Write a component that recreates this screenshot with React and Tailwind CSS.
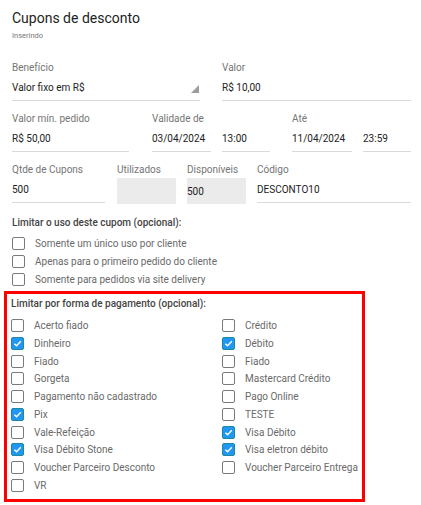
const Field = ({ label, value, className = '', gray = false }) => (
    <div className={`flex flex-col ${className}`}>
        <div className="h-[14px] leading-[14px] text-[10px] text-[#757575] whitespace-nowrap">{label}</div>
        {gray ? (
            <div className="mt-[1px] h-[26px] bg-[#ebebeb] flex items-center text-[10px] text-[#222]">
                {value}
            </div>
        ) : (
            <div className="mt-[5px] h-[16px] leading-[16px] pb-[4px] box-content border-b border-[#dadada] text-[10px] text-[#222] whitespace-nowrap relative">
                {value}
            </div>
        )}
    </div>
);

const Check = ({ checked, label }) => (
    <div className="h-[17.7px] flex items-center">
        {checked ? (
            <span className="w-[13px] h-[13px] rounded-[2px] bg-[#2196f3] border border-[#1d8a9c] flex items-center justify-center shrink-0">
                <svg width="9" height="9" viewBox="0 0 10 10">
                    <path d="M1.5 5.2 L4 7.4 L8.6 2.6" fill="none" stroke="#fff" strokeWidth="1.6" />
                </svg>
            </span>
        ) : (
            <span className="w-[13px] h-[13px] rounded-[2px] border border-[#7a7a7a] bg-white shrink-0" />
        )}
        <span className="ml-[10px] text-[10px] text-[#6a6a6a] whitespace-nowrap">{label}</span>
    </div>
);

const left = [
    ['Acerto fiado', false],
    ['Dinheiro', true],
    ['Fiado', false],
    ['Gorgeta', false],
    ['Pagamento não cadastrado', false],
    ['Pix', true],
    ['Vale-Refeição', false],
    ['Visa Débito Stone', true],
    ['Voucher Parceiro Desconto', false],
    ['VR', false],
];

const right = [
    ['Crédito', false],
    ['Débito', true],
    ['Fiado', false],
    ['Mastercard Crédito', false],
    ['Pago Online', false],
    ['TESTE', false],
    ['Visa Débito', true],
    ['Visa eletron débito', true],
    ['Voucher Parceiro Entrega', false],
];

export default function App() {
    return (
        <div className="w-[421px] h-[505px] bg-white overflow-hidden" style={{ fontFamily: 'Roboto, "Noto Sans", sans-serif' }}>
            <div className="pl-[12px] pr-[10px]">
                {/* Header */}
                <div className="pt-[9px] h-[18px] leading-[18px] text-[14px] text-[#222] box-content">Cupons de desconto</div>
                <div className="mt-[4px] text-[7.5px] leading-[10px] text-[#777]">Inserindo</div>

                {/* Row 1 */}
                <div className="mt-[20px] flex">
                    <div className="w-[188px] relative">
                        <Field label="Benefício" value="Valor fixo em R$" />
                        <svg className="absolute right-[1px] top-[24px]" width="8" height="8" viewBox="0 0 8 8">
                            <path d="M8 0 L8 8 L0 8 Z" fill="#9e9e9e" />
                        </svg>
                    </div>
                    <Field className="ml-[22px] w-[189px]" label="Valor" value="R$ 10,00" />
                </div>

                {/* Row 2 */}
                <div className="mt-[11px] flex">
                    <Field className="w-[117px]" label="Valor mín. pedido" value="R$ 50,00" />
                    <Field className="ml-[23px] w-[59px]" label="Validade de" value="03/04/2024" />
                    <Field className="ml-[11px] w-[48px]" label={'\u00a0'} value="13:00" />
                    <Field className="ml-[22px] w-[60px]" label="Até" value="11/04/2024" />
                    <Field className="ml-[11px] w-[48px]" label={'\u00a0'} value="23:59" />
                </div>

                {/* Row 3 */}
                <div className="mt-[11px] flex">
                    <Field className="w-[93px]" label="Qtde de Cupons" value="500" />
                    <Field className="ml-[12px] w-[59px]" label="Utilizados" value="" gray />
                    <Field className="ml-[11px] w-[59px]" label="Disponíveis" value="500" gray />
                    <Field className="ml-[11px] w-[154px]" label="Código" value="DESCONTO10" />
                </div>

                {/* Limitar uso */}
                <div className="mt-[12px] h-[14px] leading-[14px] text-[10px] font-medium text-[#444]">Limitar o uso deste cupom (opcional):</div>
                <div className="mt-[5px] flex flex-col">
                    <Check label="Somente um único uso por cliente" />
                    <Check label="Apenas para o primeiro pedido do cliente" />
                    <Check label="Somente para pedidos via site delivery" />
                </div>
            </div>

            {/* Forma de pagamento */}
            <div className="mt-[3px] ml-[4px] w-[361px] h-[211px] border-[3px] border-[#ff0000] pl-[4px] pt-[3px]">
                <div className="h-[14px] leading-[14px] text-[10px] font-medium text-[#444]">Limitar por forma de pagamento (opcional):</div>
                <div className="mt-[6px] flex">
                    <div className="w-[211px] flex flex-col">
                        {left.map(([l, c], i) => <Check key={i} label={l} checked={c} />)}
                    </div>
                    <div className="flex flex-col">
                        {right.map(([l, c], i) => <Check key={i} label={l} checked={c} />)}
                    </div>
                </div>
            </div>
        </div>
    );
}
